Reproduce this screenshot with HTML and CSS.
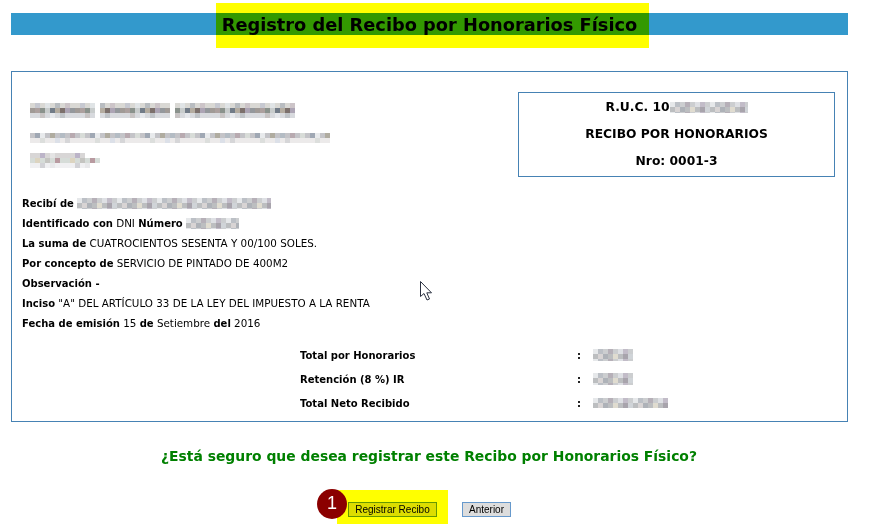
FILE: index.html
```html
<!DOCTYPE html>
<html lang="es">
<head>
<meta charset="utf-8">
<title>Registro del Recibo por Honorarios Físico</title>
<link rel="stylesheet" href="styles.css">
</head>
<body>
<svg class="defs" width="0" height="0" aria-hidden="true">
  <defs>
    <pattern id="dark" width="45" height="15" patternUnits="userSpaceOnUse">
      <rect width="45" height="5" fill="#d9d8d4"/>
      <rect x="5" width="5" height="5" fill="#c6c8d0"/><rect x="15" width="5" height="5" fill="#e0e4e6"/><rect x="25" width="5" height="5" fill="#b8bcc0"/><rect x="35" width="5" height="5" fill="#ccc4c8"/>
      <rect y="5" width="45" height="5" fill="#a09a96"/>
      <rect x="5" y="5" width="5" height="5" fill="#aca09e"/><rect x="10" y="5" width="5" height="5" fill="#8a928c"/><rect x="15" y="5" width="5" height="5" fill="#c8cccc"/><rect x="20" y="5" width="5" height="5" fill="#727c88"/><rect x="25" y="5" width="5" height="5" fill="#b4aca0"/><rect x="30" y="5" width="5" height="5" fill="#7c706c"/><rect x="35" y="5" width="5" height="5" fill="#aca4b4"/><rect x="40" y="5" width="5" height="5" fill="#94989c"/>
      <rect y="10" width="45" height="5" fill="#d8dade"/>
      <rect x="10" y="10" width="5" height="5" fill="#c8c4c4"/><rect x="20" y="10" width="5" height="5" fill="#e6e8ec"/><rect x="30" y="10" width="5" height="5" fill="#c0c4c8"/>
    </pattern>
    <pattern id="light" width="55" height="10" patternUnits="userSpaceOnUse">
      <rect width="55" height="5" fill="#c4c4c8"/>
      <rect x="5" width="5" height="5" fill="#a0a8b4"/><rect x="10" width="5" height="5" fill="#e8eaec"/><rect x="20" width="5" height="5" fill="#b0aca0"/><rect x="30" width="5" height="5" fill="#b4bcc4"/><rect x="40" width="5" height="5" fill="#b8aab0"/><rect x="50" width="5" height="5" fill="#d8dcd8"/>
      <rect y="5" width="55" height="5" fill="#eceaea"/>
      <rect x="10" y="5" width="5" height="5" fill="#dcdedc"/><rect x="25" y="5" width="5" height="5" fill="#dce0e8"/><rect x="35" y="5" width="5" height="5" fill="#d6d6d8"/>
    </pattern>
    <pattern id="pale" width="35" height="15" patternUnits="userSpaceOnUse">
      <rect width="35" height="5" fill="#d8d6d6"/>
      <rect x="10" width="5" height="5" fill="#bcb4c8"/><rect x="20" width="5" height="5" fill="#e4e4e4"/>
      <rect y="5" width="35" height="5" fill="#d6dcd8"/>
      <rect x="5" y="5" width="5" height="5" fill="#dcd4c0"/><rect x="15" y="5" width="5" height="5" fill="#c4c4c0"/><rect x="25" y="5" width="5" height="5" fill="#b89aa0"/>
      <rect y="10" width="35" height="5" fill="#f0f0f2"/>
      <rect x="10" y="10" width="5" height="5" fill="#d2d2d6"/><rect x="20" y="10" width="5" height="5" fill="#e8e8ea"/>
    </pattern>
    <pattern id="fine" width="40" height="10" patternUnits="userSpaceOnUse">
      <rect width="40" height="5" fill="#ccced0"/>
      <rect width="5" height="5" fill="#e6e8ea"/><rect x="5" width="5" height="5" fill="#bcc0c6"/><rect x="15" width="5" height="5" fill="#b6b0b8"/><rect x="25" width="5" height="5" fill="#dee0e4"/><rect x="30" width="5" height="5" fill="#c2bcc8"/>
      <rect y="5" width="40" height="5" fill="#bcbec0"/>
      <rect x="5" y="5" width="5" height="5" fill="#d8d4d4"/><rect x="10" y="5" width="5" height="5" fill="#aeb2b8"/><rect x="20" y="5" width="5" height="5" fill="#e0dcd0"/><rect x="30" y="5" width="5" height="5" fill="#a8a4ac"/><rect x="35" y="5" width="5" height="5" fill="#d0d4d8"/>
    </pattern>
  </defs>
</svg>

<header class="title-bar">
  <h1 class="title">Registro del Recibo por Honorarios Físico</h1>
  <span class="marker marker-title"></span>
</header>

<main class="receipt">
  <div class="receipt-top">
    <div class="issuer">
      <svg class="mosaic" width="266" height="15" aria-hidden="true"><rect width="65" height="15" fill="url(#dark)"/><rect x="70" width="70" height="15" fill="url(#dark)"/><rect x="145" width="120" height="15" fill="url(#dark)"/></svg>
      <svg class="mosaic" width="300" height="10" aria-hidden="true"><rect width="300" height="10" fill="url(#light)"/></svg>
      <svg class="mosaic" width="70" height="15" aria-hidden="true"><rect width="55" height="5" fill="url(#pale)"/><rect y="5" width="70" height="5" fill="url(#pale)"/><rect y="10" width="60" height="5" fill="url(#pale)"/></svg>
    </div>
    <div class="ruc-box">
      <p class="ruc-line">R.U.C. 10<svg class="inline-mosaic" width="78" height="11" aria-hidden="true"><rect width="78" height="11" fill="url(#fine)"/></svg></p>
      <p class="ruc-line">RECIBO POR HONORARIOS</p>
      <p class="ruc-line">Nro: 0001-3</p>
    </div>
  </div>

  <div class="details">
    <p class="detail"><b>Recibí de</b> <svg class="inline-mosaic" width="194" height="11" aria-hidden="true"><rect width="194" height="11" fill="url(#fine)"/></svg></p>
    <p class="detail"><b>Identificado con</b> DNI <b>Número</b> <svg class="inline-mosaic" width="53" height="11" aria-hidden="true"><rect width="53" height="11" fill="url(#fine)"/></svg></p>
    <p class="detail"><b>La suma de</b> CUATROCIENTOS SESENTA Y 00/100 SOLES.</p>
    <p class="detail"><b>Por concepto de</b> SERVICIO DE PINTADO DE 400M2</p>
    <p class="detail"><b>Observación -</b></p>
    <p class="detail"><b>Inciso</b> "A" DEL ARTÍCULO 33 DE LA LEY DEL IMPUESTO A LA RENTA</p>
    <p class="detail"><b>Fecha de emisión</b> 15 <b>de</b> Setiembre <b>del</b> 2016</p>
  </div>

  <div class="totals">
    <div class="total-row"><b class="total-label">Total por Honorarios</b><b class="total-colon">:</b><svg class="inline-mosaic" width="40" height="12" aria-hidden="true"><rect width="40" height="12" fill="url(#fine)"/></svg></div>
    <div class="total-row"><b class="total-label">Retención (8 %) IR</b><b class="total-colon">:</b><svg class="inline-mosaic" width="40" height="12" aria-hidden="true"><rect width="40" height="12" fill="url(#fine)"/></svg></div>
    <div class="total-row"><b class="total-label">Total Neto Recibido</b><b class="total-colon">:</b><svg class="inline-mosaic" width="75" height="10" aria-hidden="true"><rect width="75" height="10" fill="url(#fine)"/></svg></div>
  </div>

  <svg class="cursor" width="14" height="20" viewBox="0 0 14 20" aria-hidden="true"><path d="M1.5 .5V15.5L5 12.5L8 19L10.5 18L7.8 11.8H12.5Z" fill="#fff" stroke="#2a3040" stroke-width="1"/></svg>
</main>

<p class="question">¿Está seguro que desea registrar este Recibo por Honorarios Físico?</p>

<div class="actions">
  <button class="btn btn-primary" type="button">Registrar Recibo</button>
  <button class="btn btn-back" type="button">Anterior</button>
  <span class="marker marker-action"></span>
  <span class="step-badge">1</span>
</div>
</body>
</html>
```

FILE: styles.css
```css
* { box-sizing: border-box; }

html, body { margin: 0; padding: 0; background: #fff; }

body {
  width: 886px;
  height: 528px;
  overflow: hidden;
  position: relative;
  font-family: "DejaVu Sans", Verdana, sans-serif;
  color: #000;
}

.defs { position: absolute; }

.title-bar {
  margin: 13px 0 0 11px;
  width: 837px;
  height: 22px;
  background: #3399cc;
  display: flex;
  justify-content: center;
  align-items: center;
}

.title {
  margin: 0;
  padding: 2px 0 0;
  font-size: 17.8px;
  line-height: 22px;
  font-weight: bold;
  white-space: nowrap;
}

.marker {
  position: absolute;
  background: #ffff00;
  mix-blend-mode: multiply;
}

.marker-title { left: 216px; top: 3px; width: 433px; height: 45px; }

.receipt {
  position: relative;
  margin: 36px 0 0 11px;
  width: 837px;
  height: 351px;
  border: 1px solid #4682b4;
}

.receipt-top {
  display: flex;
  justify-content: space-between;
  padding: 20px 12px 0 18px;
}

.issuer {
  display: flex;
  flex-direction: column;
  padding-top: 11px;
}

.mosaic { display: block; }
.mosaic + .mosaic { margin-top: 15px; }
.mosaic + .mosaic + .mosaic { margin-top: 10px; }

.inline-mosaic { vertical-align: -2px; }

.ruc-box {
  width: 317px;
  height: 85px;
  border: 1px solid #4682b4;
  padding-top: 1px;
  text-align: center;
}

.ruc-line {
  margin: 0;
  font-size: 12.3px;
  line-height: 27px;
  height: 27px;
  font-weight: bold;
  white-space: nowrap;
}

.details { padding: 16px 0 0 10px; }

.detail {
  margin: 0;
  font-size: 10.35px;
  line-height: 20px;
  height: 20px;
  white-space: nowrap;
}

.detail b { font-size: 10px; }

.totals { padding: 10px 0 0 288px; }

.total-row {
  display: flex;
  align-items: center;
  height: 24px;
  font-size: 10px;
}

.total-label { width: 277px; }
.total-colon { width: 16px; }

.cursor { position: absolute; left: 407px; top: 209px; }

.question {
  margin: 24px 0 0;
  width: 858px;
  text-align: center;
  font-size: 13.9px;
  line-height: 20px;
  font-weight: bold;
  color: #008000;
  white-space: nowrap;
}

.actions {
  display: flex;
  padding: 36px 0 0 348px;
}

.btn {
  height: 15px;
  padding: 0;
  border: 1px solid #6699cc;
  background: #dddddd;
  color: #000;
  font-family: "Liberation Sans", Arial, sans-serif;
  font-size: 10px;
  line-height: 13px;
}

.btn-primary { width: 89px; margin-right: 25px; }
.btn-back { width: 49px; }

.marker-action { left: 337px; top: 490px; width: 111px; height: 34px; }

.step-badge {
  position: absolute;
  left: 317px;
  top: 489px;
  width: 30px;
  height: 30px;
  border-radius: 50%;
  background: #8b0000;
  color: #fff;
  font-family: "Liberation Sans", Arial, sans-serif;
  font-size: 18px;
  line-height: 28px;
  text-align: center;
}
```
